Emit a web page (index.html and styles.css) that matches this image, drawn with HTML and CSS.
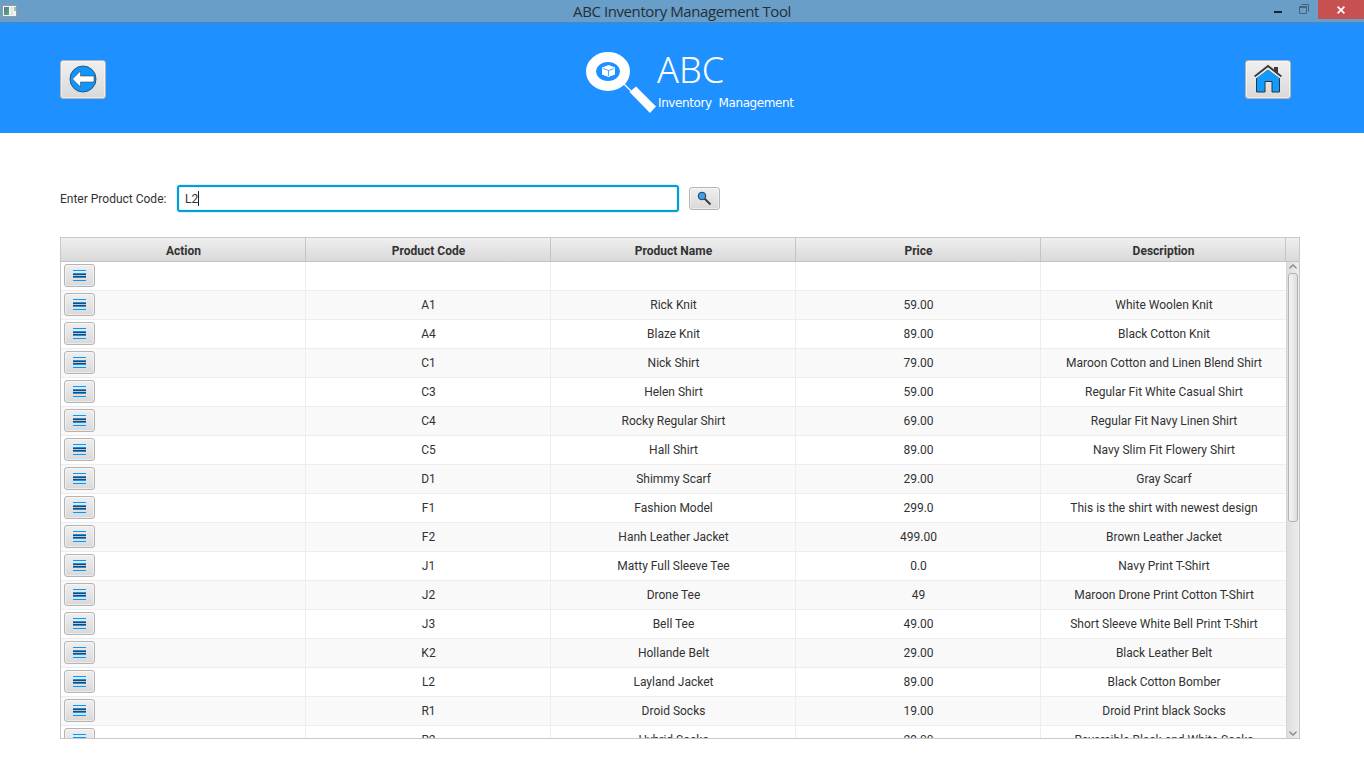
FILE: index.html
```html
<!DOCTYPE html>
<html lang="en">
<head>
<meta charset="utf-8">
<title>ABC Inventory Management Tool</title>
<link rel="stylesheet" href="styles.css">
</head>
<body>
<div class="titlebar">
  <svg class="app-icon" width="16" height="14" viewBox="0 0 16 14"><defs><linearGradient id="g" x1="0" y1="0" x2="1" y2="1"><stop offset="0" stop-color="#4a78a8"/><stop offset="1" stop-color="#5fae6e"/></linearGradient></defs><rect x=".5" y=".5" width="14" height="11" fill="#f4f4f4" stroke="#9a9a9a"/><rect x="2" y="2" width="5" height="8" fill="url(#g)"/><rect x="9" y="2" width="2" height="8" fill="#e2e2e2"/><rect x="12" y="2" width="2" height="4" fill="#9cc3b4"/></svg>
  <h1 class="window-title">ABC Inventory Management Tool</h1>
  <div class="window-buttons">
    <svg class="minmax" width="50" height="22" viewBox="0 0 50 22"><path d="M6 11h8v2H6z" fill="#222"/><path d="M33.500 4.500h7v7M31.500 6.500h7v7h-7z" fill="none" stroke="#47637a"/><path d="M31 6h8v2h-8z" fill="#47637a"/></svg>
    <div class="close"><svg width="8" height="8" viewBox="0 0 8 8"><path d="M.6.6l6.800 6.800M7.400.6L.6 7.400" stroke="#fff" stroke-width="1.700"/></svg></div>
  </div>
</div>
<header class="banner">
  <button class="btn big" aria-label="Back"><svg class="lift" width="28" height="28" viewBox="0 0 28 28"><circle cx="14" cy="14" r="13" fill="#0f95fb" stroke="#2b5578" stroke-width="1"/><path d="M3.500 14L11.500 6v5H25v6H11.500v5z" fill="#fff" stroke="#444" stroke-width=".6"/></svg></button>
  <div class="logo">
    <svg width="72" height="64" viewBox="0 0 72 64"><ellipse cx="23" cy="20.500" rx="17" ry="14.500" fill="none" stroke="#fff" stroke-width="10"/><path d="M38 32l10 10" stroke="#fff" stroke-width="1.300"/><path d="M51 35.500L71 55.500L65 62L44.500 41z" fill="#fff"/><path d="M23.500 14l6.500 2.500v7L23.500 26l-6.500-2.500v-7z" fill="#fff"/><path d="M18 17.500l5.500 2 5.500-2M23.500 19.500V25" fill="none" stroke="#1e90ff" stroke-width=".8"/></svg>
    <div class="logo-text"><span class="logo-name">ABC</span><span class="logo-sub">Inventory&nbsp; Management</span></div>
  </div>
  <button class="btn big" aria-label="Home"><svg class="lift" width="28" height="30" viewBox="0 0 28 30"><path d="M2.500 28V13.500L14 5.500l11.500 8V28H18V17.500H11V28z" fill="#0f9bff" stroke="#333" stroke-width="1"/><path d="M.7 12.500L14 2l13.300 10.500" fill="none" stroke="#3a3a3a" stroke-width="2"/><path d="M1.500 14L14 4.800 26.500 14" fill="none" stroke="#eee" stroke-width="1.200"/><path d="M20 3h4v6.500l-4-3z" fill="#3a3a3a"/></svg></button>
</header>
<main class="content">
  <div class="search">
    <label class="search-label">Enter Product Code:</label>
    <div class="field"><span class="typed">L2</span><span class="caret"></span></div>
    <button class="btn small" aria-label="Search"><svg width="15" height="15" viewBox="0 0 15 15"><path d="M7.500 7.500l6 6" stroke="#3c3c3c" stroke-width="2"/><circle cx="5" cy="5" r="3.800" fill="#3b9ff5" stroke="#333b45" stroke-width="1"/></svg></button>
  </div>
  <div class="table">
    <div class="head"><div>Action</div><div>Product Code</div><div>Product Name</div><div>Price</div><div>Description</div><div class="corner"></div></div>
    <div class="view">
      <div class="rows" id="rows"></div>
      <div class="scrollbar">
        <svg width="8" height="5" viewBox="0 0 8 5"><path d="M.5 4.200L4 1l3.500 3.200" fill="none" stroke="#888" stroke-width="1.400"/></svg>
        <div class="thumb"></div>
        <svg class="down" width="8" height="5" viewBox="0 0 8 5"><path d="M.5.8L4 4 7.500.8" fill="none" stroke="#888" stroke-width="1.400"/></svg>
      </div>
    </div>
  </div>
</main>
<script src="app.js"></script>
</body>
</html>
```
FILE: styles.css
```css
* { box-sizing: border-box; }
body { margin: 0; width: 1364px; height: 764px; overflow: hidden; background: #fff; color: #323232; font: 12px Roboto, sans-serif; }
svg { display: block; flex: none; }
.titlebar { height: 23px; background: #689ec7; border-bottom: 1px solid #5486ad; display: grid; grid-template-columns: 100px 1fr 100px; }
.app-icon { margin: 5px 0 0 2px; }
.window-title { margin: 0; text-align: center; font: 15px/23px "Open Sans", sans-serif; letter-spacing: -0.41px; color: #262e36; }
.window-buttons { display: flex; justify-content: flex-end; }
.close { width: 46px; height: 19px; background: #c75050; display: flex; align-items: center; justify-content: center; }
.banner { height: 110px; background: #1e90ff; padding: 0 73px 0 60px; display: grid; grid-template-columns: 525px 1fr 46px; align-items: start; }
.btn { border: 1px solid #b5b5b5; border-radius: 3px; background: linear-gradient(#efefef, #d9d9d9); box-shadow: inset 0 0 0 1px rgba(255,255,255,.45); padding: 0; display: flex; align-items: center; justify-content: center; flex: none; }
.big { width: 46px; height: 39px; margin-top: 37px; }
.lift { margin-bottom: 2px; }
.small { width: 31px; height: 23px; }
.logo { display: flex; margin-top: 28px; color: #fff; }
.logo-text { display: flex; flex-direction: column; }
.logo-name { font: 36px/40px "Noto Sans", sans-serif; font-weight: 300; margin-top: -1px; }
.logo-sub { font: 12px/16px "DejaVu Sans", sans-serif; letter-spacing: -0.4px; white-space: nowrap; margin: 5px 0 0 1px; }
.content { padding: 52px 64px 0 60px; }
.search { display: flex; align-items: center; height: 27px; }
.search-label { width: 117px; }
.field { width: 502px; height: 27px; border: 2px solid #039ed3; border-radius: 3px; box-shadow: 0 0 1px 1px #d9f1f9, inset 0 0 0 1px #e2f5fb; margin-right: 10px; padding-left: 6px; display: flex; align-items: center; }
.caret { width: 1px; height: 15px; background: #222; }
.table { margin-top: 25px; width: 1240px; height: 502px; border: 1px solid #c8c8c8; }
.head { height: 24px; display: grid; grid-template-columns: repeat(5, 245px) 1fr; background: linear-gradient(#efefef, #d9d9d9); border-bottom: 1px solid #c4c4c4; font-weight: 700; line-height: 26px; text-align: center; }
.head > div { height: 23px; border-right: 1px solid #c4c4c4; padding-left: 1px; }
.head > .corner { border-right: 0; }
.view { height: 476px; display: flex; overflow: hidden; }
.rows { width: 1225px; }
.row { height: 29px; display: grid; grid-template-columns: repeat(5, 245px); border-bottom: 1px solid #ededed; line-height: 28px; text-align: center; }
.row:nth-child(even) { background: #f9f9f9; }
.row > div { border-right: 1px solid #ededed; padding-left: 1px; white-space: nowrap; }
.row > div:last-child { border-right: 0; }
.row > .action { padding: 2px 3px; }
.scrollbar { width: 13px; height: 476px; border-left: 1px solid #d5d5d5; background: linear-gradient(90deg, #dedede, #ededed); display: flex; flex-direction: column; align-items: center; padding-top: 2px; }
.thumb { width: 10px; height: 249px; margin-top: 4px; border: 1px solid #b2b2b2; border-radius: 3px; background: linear-gradient(90deg, #f4f4f4, #dedede); }
.down { margin-top: auto; margin-bottom: 2px; }
```
FILE: app.js
```js
const products = [
  ["", "", "", ""],
  ["A1", "Rick Knit", "59.00", "White Woolen Knit"],
  ["A4", "Blaze Knit", "89.00", "Black Cotton Knit"],
  ["C1", "Nick Shirt", "79.00", "Maroon Cotton and Linen Blend Shirt"],
  ["C3", "Helen Shirt", "59.00", "Regular Fit White Casual Shirt"],
  ["C4", "Rocky Regular Shirt", "69.00", "Regular Fit Navy Linen Shirt"],
  ["C5", "Hall Shirt", "89.00", "Navy Slim Fit Flowery Shirt"],
  ["D1", "Shimmy Scarf", "29.00", "Gray Scarf"],
  ["F1", "Fashion Model", "299.0", "This is the shirt with newest design"],
  ["F2", "Hanh Leather Jacket", "499.00", "Brown Leather Jacket"],
  ["J1", "Matty Full Sleeve Tee", "0.0", "Navy Print T-Shirt"],
  ["J2", "Drone Tee", "49", "Maroon Drone Print Cotton T-Shirt"],
  ["J3", "Bell Tee", "49.00", "Short Sleeve White Bell Print T-Shirt"],
  ["K2", "Hollande Belt", "29.00", "Black Leather Belt"],
  ["L2", "Layland Jacket", "89.00", "Black Cotton Bomber"],
  ["R1", "Droid Socks", "19.00", "Droid Print black Socks"],
  ["R2", "Hybrid Socks", "29.00", "Reversible Black and White Socks"]
];
const BLUE = "#0596ff", DARK = "#3d4248";
const stripes = [[0, BLUE], [3, BLUE], [4, DARK], [5, "#9fcdf2"], [6, DARK], [7, BLUE], [10, BLUE]];
const icon = `<svg width="13" height="11" viewBox="0 0 13 11">${stripes.map(([y, c]) => `<path d="M0 ${y}h13v1H0z" fill="${c}"/>`).join("")}</svg>`;
document.getElementById("rows").innerHTML = products.map(p =>
  `<div class="row"><div class="action"><button class="btn small" aria-label="Actions">${icon}</button></div>${p.map(t => `<div>${t}</div>`).join("")}</div>`
).join("");
```
